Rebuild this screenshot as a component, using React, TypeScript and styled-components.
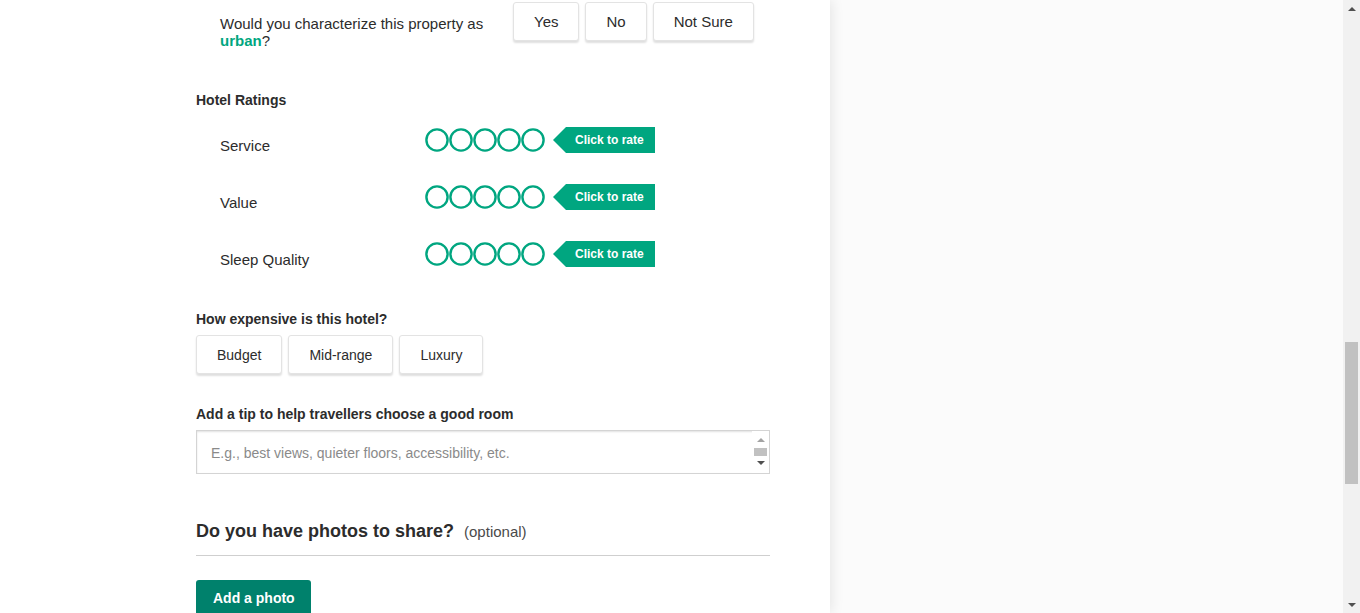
import React from "react";
import styled, { createGlobalStyle } from "styled-components";

const Global = createGlobalStyle`
  html, body { margin: 0; padding: 0; height: 613px; overflow: hidden; }
  body { font-family: "Liberation Sans", Arial, sans-serif; color: #2c2c2c; background: #fbfbfb; }
  * { box-sizing: border-box; }
`;

const green = "#00a680";

const Page = styled.div`
  display: flex;
  height: 613px;
  width: 1360px;
`;

const Main = styled.div`
  flex: 1;
  display: flex;
  overflow: hidden;
`;

const LeftPanel = styled.div`
  width: 830px;
  flex: none;
  background: #fff;
  padding: 2px 0 0 196px;
  position: relative;
  z-index: 1;
  box-shadow: 2px 0 12px rgba(0, 0, 0, 0.09);
`;

const RightArea = styled.div`
  flex: 1;
  background: #fbfbfb;
`;

const Form = styled.div`
  width: 574px;
  display: flex;
  flex-direction: column;
`;

const QuestionRow = styled.div`
  display: flex;
  padding-left: 24px;
`;

const QuestionText = styled.div`
  width: 293px;
  padding-top: 13px;
  font-size: 15px;
  line-height: 17px;
  color: #2c2c2c;
`;

const Strong = styled.span`
  color: ${green};
  font-weight: bold;
`;

const ButtonGroup = styled.div<{ $mt?: number }>`
  display: flex;
  gap: 6px;
  margin-top: ${(p) => p.$mt ?? 0}px;
`;

const ChoiceButton = styled.button<{ $size: number }>`
  height: 39px;
  padding: 0 20px;
  background: #fff;
  border: 1px solid #e3e3e3;
  border-radius: 3px;
  box-shadow: 0 2px 2px rgba(0, 0, 0, 0.13);
  font-family: "Liberation Sans", Arial, sans-serif;
  font-size: ${(p) => p.$size}px;
  color: #2c2c2c;
  cursor: pointer;
`;

const Heading = styled.div<{ $mt: number }>`
  margin-top: ${(p) => p.$mt}px;
  font-size: 14px;
  line-height: 17px;
  font-weight: bold;
  color: #2c2c2c;
`;

const RatingRow = styled.div<{ $mt: number }>`
  display: flex;
  align-items: flex-start;
  height: 26px;
  margin-top: ${(p) => p.$mt}px;
  padding-left: 24px;
`;

const RatingLabel = styled.div`
  width: 205px;
  margin-top: 11px;
  font-size: 15px;
  line-height: 16px;
  color: #2c2c2c;
`;

const Bubbles = styled.div`
  display: flex;
  height: 26px;
  align-items: center;
`;

const Tag = styled.div`
  margin-left: 8px;
  width: 102px;
  height: 26px;
  background: ${green};
  clip-path: polygon(0 50%, 13px 0, 100% 0, 100% 100%, 13px 100%);
  color: #fff;
  font-size: 12px;
  font-weight: bold;
  line-height: 26px;
  padding-left: 22px;
  white-space: nowrap;
`;

const TipBox = styled.div`
  margin-top: 7px;
  height: 44px;
  display: flex;
  border: 1px solid #d4d4d4;
  box-shadow: inset 0 1px 2px rgba(0, 0, 0, 0.12);
  background: #fff;
`;

const TipInput = styled.textarea`
  flex: 1;
  border: none;
  outline: none;
  resize: none;
  background: transparent;
  padding: 14px 14px 0;
  font-family: "Liberation Sans", Arial, sans-serif;
  font-size: 14px;
  line-height: 16px;
  color: #2c2c2c;
  overflow: hidden;
  &::placeholder { color: #8a8a8a; }
`;

const MiniScroll = styled.div`
  width: 17px;
  display: flex;
  flex-direction: column;
  align-items: center;
  padding-top: 7px;
  background: #fff;
`;

const MiniThumb = styled.div`
  width: 13px;
  height: 8px;
  background: #c1c1c1;
  margin: 6px 0 5px;
`;

const PhotosHeading = styled.div`
  margin-top: 46px;
  display: flex;
  align-items: baseline;
  gap: 10px;
`;

const PhotosTitle = styled.span`
  font-size: 18px;
  line-height: 22px;
  font-weight: bold;
  color: #2c2c2c;
`;

const Optional = styled.span`
  font-size: 15px;
  color: #4a4a4a;
`;

const Divider = styled.div`
  margin-top: 13px;
  height: 1px;
  background: #cfcfcf;
`;

const PrimaryButton = styled.button`
  margin-top: 24px;
  align-self: flex-start;
  height: 36px;
  padding: 0 16px 0 17px;
  border: none;
  border-radius: 3px 3px 0 0;
  background: #00816c;
  color: #fff;
  font-family: "Liberation Sans", Arial, sans-serif;
  font-size: 14px;
  font-weight: bold;
  cursor: pointer;
`;

const ScrollBar = styled.div`
  width: 17px;
  flex: none;
  display: flex;
  flex-direction: column;
  background: #f1f1f1;
`;

const ArrowCell = styled.div`
  height: 17px;
  display: flex;
  align-items: center;
  justify-content: center;
`;

const Track = styled.div`
  flex: 1;
  padding: 0 2px;
`;

const Thumb = styled.div`
  margin-top: 325px;
  height: 142px;
  background: #c1c1c1;
`;

const Tri = ({ down, color, size }: { down?: boolean; color: string; size: number }) => (
  <svg width={size * 2} height={size} viewBox="0 0 8 4" style={{ display: "block" }}>
    {down ? <polygon points="0,0 8,0 4,4" fill={color} /> : <polygon points="4,0 8,4 0,4" fill={color} />}
  </svg>
);

const Bubble = () => (
  <svg width="24" height="24" viewBox="0 0 24 24">
    <circle cx="12" cy="12" r="10.6" fill="none" stroke={green} strokeWidth="2.4" />
  </svg>
);

const ratings = [
  { label: "Service", mt: 18 },
  { label: "Value", mt: 31 },
  { label: "Sleep Quality", mt: 31 },
];

export default function App() {
  return (
    <>
      <Global />
      <Page>
        <Main>
          <LeftPanel>
            <Form>
              <QuestionRow>
                <QuestionText>
                  Would you characterize this property as <Strong>urban</Strong>?
                </QuestionText>
                <ButtonGroup>
                  <ChoiceButton $size={15}>Yes</ChoiceButton>
                  <ChoiceButton $size={15}>No</ChoiceButton>
                  <ChoiceButton $size={15}>Not Sure</ChoiceButton>
                </ButtonGroup>
              </QuestionRow>

              <Heading $mt={43}>Hotel Ratings</Heading>
              {ratings.map((r) => (
                <RatingRow key={r.label} $mt={r.mt}>
                  <RatingLabel>{r.label}</RatingLabel>
                  <Bubbles>
                    {[0, 1, 2, 3, 4].map((i) => (
                      <Bubble key={i} />
                    ))}
                  </Bubbles>
                  <Tag>Click to rate</Tag>
                </RatingRow>
              ))}

              <Heading $mt={44}>How expensive is this hotel?</Heading>
              <ButtonGroup $mt={7}>
                <ChoiceButton $size={14}>Budget</ChoiceButton>
                <ChoiceButton $size={14}>Mid-range</ChoiceButton>
                <ChoiceButton $size={14}>Luxury</ChoiceButton>
              </ButtonGroup>

              <Heading $mt={32}>Add a tip to help travellers choose a good room</Heading>
              <TipBox>
                <TipInput placeholder="E.g., best views, quieter floors, accessibility, etc." />
                <MiniScroll>
                  <Tri color="#a3a3a3" size={4} />
                  <MiniThumb />
                  <Tri down color="#505050" size={4} />
                </MiniScroll>
              </TipBox>

              <PhotosHeading>
                <PhotosTitle>Do you have photos to share?</PhotosTitle>
                <Optional>(optional)</Optional>
              </PhotosHeading>
              <Divider />
              <PrimaryButton>Add a photo</PrimaryButton>
            </Form>
          </LeftPanel>
          <RightArea />
        </Main>
        <ScrollBar>
          <ArrowCell>
            <Tri color="#505050" size={4} />
          </ArrowCell>
          <Track>
            <Thumb />
          </Track>
          <ArrowCell>
            <Tri down color="#505050" size={4} />
          </ArrowCell>
        </ScrollBar>
      </Page>
    </>
  );
}
